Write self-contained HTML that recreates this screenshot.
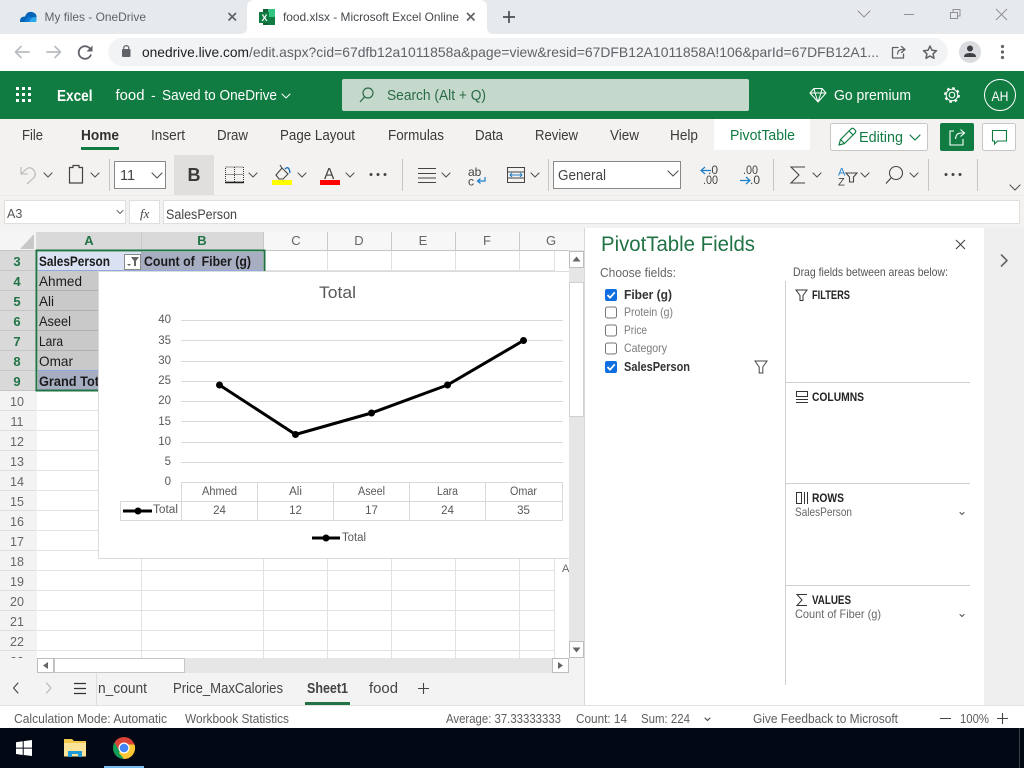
<!DOCTYPE html>
<html><head><meta charset="utf-8"><title>food.xlsx - Microsoft Excel Online</title>
<style>
html,body{margin:0;padding:0;background:#fff;width:1024px;height:768px;overflow:hidden}
svg{display:block;position:absolute;left:0;top:0}
text{font-family:"Liberation Sans","DejaVu Sans",sans-serif;white-space:pre}
.s{fill:none;stroke-linecap:round;stroke-linejoin:round}
</style></head><body>
<svg width="1024" height="768" viewBox="0 0 1024 768" xmlns="http://www.w3.org/2000/svg">
<!-- browser chrome -->
<rect width="1024" height="34" fill="#e7eaed"/>
<rect y="34" width="1024" height="37" fill="#fff"/>
<path d="M240 34Q247 34 247 27V8Q247 0 255 0H479Q487 0 487 8V27Q487 34 494 34Z" fill="#fff"/>
<path d="M20 22Q19.500 16.500 25 16.500Q27 11 32 12Q36 13 36.500 16Q36 22 36 22Z" fill="#0364b8"/>
<path d="M25 22Q36 22 36 22Q36 16 31 17Q27 15 25 22Z" fill="#0f78d4"/>
<path d="M36 22H29Q31 17 35 17Q37.500 17 36 22Z" fill="#28a8ea"/>
<text x="44.500" y="21" font-size="12" fill="#5f6368" textLength="101.500" lengthAdjust="spacingAndGlyphs">My files - OneDrive</text>
<path d="M228.500 13L236 20.500M236 13L228.500 20.500" stroke="#5f6368" stroke-width="1.700"/>
<rect x="263" y="9" width="12" height="16" fill="#185c37"/><rect x="268" y="9" width="7" height="8" fill="#33c481"/><rect x="268" y="17" width="7" height="8" fill="#107c41"/>
<rect x="259" y="12" width="10" height="11" fill="#107c41"/>
<text x="261.500" y="21" font-size="9" font-weight="bold" fill="#fff">X</text>
<text x="283" y="21" font-size="12" fill="#45494d" textLength="176" lengthAdjust="spacingAndGlyphs">food.xlsx - Microsoft Excel Online</text>
<path d="M467 13L474.500 20.500M474.500 13L467 20.500" stroke="#5f6368" stroke-width="1.700"/>
<path d="M509 11V23M503 17H515" stroke="#4a4d51" stroke-width="1.700"/>
<path d="M858 11L864 17L870 11" class="s" stroke="#8f9194"/>
<path d="M904 14.500H914" stroke="#8f9194"/>
<path d="M950.500 12.500H957.500V18.500H950.500ZM953 12V9.500H960V16H957.500" fill="none" stroke="#8f9194"/>
<path d="M996 9L1007 20M1007 9L996 20" stroke="#8f9194"/>
<rect x="108" y="38" width="840" height="28" rx="14" fill="#f1f3f4"/>
<path d="M29 52H16M21 46.500L15.500 52L21 57.500" class="s" stroke="#b9bcc0" stroke-width="1.700"/>
<path d="M47 52H60M55 46.500L60.500 52L55 57.500" class="s" stroke="#b9bcc0" stroke-width="1.700"/>
<path d="M91 50.500A6.300 6.300 0 1 0 91 54.500" fill="none" stroke="#5f6368" stroke-width="1.800"/><path d="M92.500 45.500V51.500H86.500Z" fill="#5f6368"/>
<rect x="122" y="49" width="8.500" height="8" rx="1" fill="#5f6368"/><path d="M123.800 49V47Q126.200 44.300 128.700 47V49" fill="none" stroke="#5f6368" stroke-width="1.200"/>
<text x="142" y="57" font-size="14" fill="#202124" textLength="107" lengthAdjust="spacingAndGlyphs">onedrive.live.com</text>
<text x="249" y="57" font-size="14" fill="#5f6368" textLength="630" lengthAdjust="spacingAndGlyphs">/edit.aspx?cid=67dfb12a1011858a&amp;page=view&amp;resid=67DFB12A1011858A!106&amp;parId=67DFB12A1...</text>
<path d="M898 47.500H892.500V58H903.500V54M897.500 54Q898 49.500 902 49.500H905M901.500 46.500L905 49.500L901.500 52.500" class="s" stroke="#5f6368" stroke-width="1.300"/>
<path d="M930 46L931.900 50.200L936.500 50.700L933.100 53.800L934 58.300L930 56L926 58.300L926.900 53.800L923.500 50.700L928.100 50.200Z" fill="none" stroke="#5f6368" stroke-width="1.500" stroke-linejoin="round"/>
<circle cx="970" cy="52" r="11" fill="#dadce0"/><circle cx="970" cy="48.500" r="3" fill="#3c4043"/><path d="M964 57Q964 53 970 53Q976 53 976 57Z" fill="#3c4043"/>
<circle cx="1002.500" cy="46.500" r="1.600" fill="#5f6368"/><circle cx="1002.500" cy="52" r="1.600" fill="#5f6368"/><circle cx="1002.500" cy="57.500" r="1.600" fill="#5f6368"/>

<!-- green header -->
<rect y="71" width="1024" height="48" fill="#107c41"/>
<g fill="#fff"><rect x="16" y="87" width="3" height="3"/><rect x="22" y="87" width="3" height="3"/><rect x="28" y="87" width="3" height="3"/><rect x="16" y="93" width="3" height="3"/><rect x="22" y="93" width="3" height="3"/><rect x="28" y="93" width="3" height="3"/><rect x="16" y="99" width="3" height="3"/><rect x="22" y="99" width="3" height="3"/><rect x="28" y="99" width="3" height="3"/></g>
<text x="57" y="101" font-size="16" font-weight="bold" fill="#fff" textLength="35.500" lengthAdjust="spacingAndGlyphs">Excel</text>
<text x="115.500" y="100" font-size="14.500" fill="#fff" textLength="29" lengthAdjust="spacingAndGlyphs">food</text>
<text x="151" y="100" font-size="14" fill="#fff">-</text>
<text x="162" y="100" font-size="14.500" fill="#fff" textLength="115" lengthAdjust="spacingAndGlyphs">Saved to OneDrive</text>
<path d="M282 94L286 98L290 94" class="s" stroke="#fff"/>
<rect x="342" y="79" width="407" height="32" rx="2" fill="#c4d9cb"/>
<circle cx="368" cy="93" r="5" fill="none" stroke="#2c6b47" stroke-width="1.200"/><path d="M364.500 97L360 102" stroke="#2c6b47" stroke-width="1.300"/>
<text x="387" y="100" font-size="14.500" fill="#2a6a46" textLength="99" lengthAdjust="spacingAndGlyphs">Search (Alt + Q)</text>
<path d="M814 88.500H822L826 93L818 102L810 93ZM810 93H826M815 93L818 102L821 93M814 88.500L815 93M822 88.500L821 93" fill="none" stroke="#fff" stroke-width="1" stroke-linejoin="round"/>
<text x="834" y="100" font-size="14.500" fill="#fff" textLength="77" lengthAdjust="spacingAndGlyphs">Go premium</text>
<circle cx="952" cy="95" r="2.800" fill="none" stroke="#fff" stroke-width="1.100"/>
<circle cx="952" cy="95" r="7" fill="none" stroke="#fff" stroke-width="1.800" stroke-dasharray="2.700 2.800"/>
<circle cx="952" cy="95" r="5.800" fill="none" stroke="#fff" stroke-width="1"/>
<circle cx="1000" cy="95" r="15.500" fill="none" stroke="#fff" stroke-width="1"/>
<text x="991.500" y="101" font-size="14" fill="#fff" textLength="17" lengthAdjust="spacingAndGlyphs">AH</text>

<!-- ribbon -->
<rect y="119" width="1024" height="109" fill="#f3f2f1"/>
<rect x="714" y="119" width="96" height="31" fill="#fff"/>
<g font-size="14.500" fill="#3b3a39">
<text x="22" y="140" textLength="21" lengthAdjust="spacingAndGlyphs">File</text>
<text x="81" y="140" font-weight="bold" fill="#323130" textLength="38" lengthAdjust="spacingAndGlyphs">Home</text>
<text x="151" y="140" textLength="34" lengthAdjust="spacingAndGlyphs">Insert</text>
<text x="217" y="140" textLength="31" lengthAdjust="spacingAndGlyphs">Draw</text>
<text x="280" y="140" textLength="75" lengthAdjust="spacingAndGlyphs">Page Layout</text>
<text x="388" y="140" textLength="56" lengthAdjust="spacingAndGlyphs">Formulas</text>
<text x="475" y="140" textLength="28" lengthAdjust="spacingAndGlyphs">Data</text>
<text x="535" y="140" textLength="43" lengthAdjust="spacingAndGlyphs">Review</text>
<text x="610" y="140" textLength="29" lengthAdjust="spacingAndGlyphs">View</text>
<text x="670" y="140" textLength="28" lengthAdjust="spacingAndGlyphs">Help</text>
<text x="730" y="140" fill="#107c41" textLength="65" lengthAdjust="spacingAndGlyphs">PivotTable</text>
</g>
<rect x="81" y="147" width="38" height="3" fill="#107c41"/>
<rect x="830.500" y="123.500" width="97" height="27" rx="2" fill="#fff" stroke="#c8c6c4"/>
<path d="M839 145L840.500 139.500L851 129Q852.500 127.500 854 129L855 130Q856.500 131.500 855 133L844.500 143.500ZM849 131L853 135M840.500 139.500L844.500 143.500" fill="none" stroke="#107c41" stroke-width="1.200" stroke-linejoin="round"/>
<text x="859" y="142" font-size="15" fill="#107c41" textLength="44" lengthAdjust="spacingAndGlyphs">Editing</text>
<path d="M910 135L915 140L920 135" class="s" stroke="#107c41" stroke-width="1.200"/>
<rect x="940" y="123" width="34" height="28" rx="2" fill="#107c41"/>
<path d="M954 131H950V145H963V139M955.500 139Q956 133 961 133H964M960.500 129.500L964.500 133L960.500 136.500" fill="none" stroke="#fff" stroke-width="1.100"/>
<rect x="982.500" y="123.500" width="33" height="27" rx="2" fill="#fff" stroke="#c8c6c4"/>
<path d="M992.500 130.500H1006.500V141H997.500L994.500 144V141H992.500Z" fill="none" stroke="#107c41" stroke-width="1.100"/>

<!-- toolbar -->
<g stroke="#c8c6c4"><path d="M109.500 159V191M402.500 159V191M548.500 159V191M773.500 159V191M928.500 159V191M977.500 159V191"/></g>
<path d="M21 167V174H28M21 174L27 168.500Q31 166.500 34 170.500Q37 175 33 178.500L27 184" fill="none" stroke="#b8b6b4" stroke-width="1.100"/>
<path d="M69.500 167.500H73V165.500H79V167.500H82.500V183H69.500Z" fill="none" stroke="#444" stroke-width="1.200"/>
<rect x="114.500" y="161.500" width="51" height="27" fill="#fff" stroke="#8a8886"/>
<text x="120" y="180" font-size="14.500" fill="#444">11</text>
<rect x="174" y="155" width="40" height="40" fill="#e0dfde"/>
<text x="187.500" y="181" font-size="18" font-weight="bold" fill="#3b3a39">B</text>
<path d="M225.500 167H243.500V182H225.500ZM234.500 167V182M225.500 174.500H243.500" fill="none" stroke="#333" stroke-width="1" stroke-dasharray="1 1"/><path d="M225 182.500H244" stroke="#222" stroke-width="1.400"/>
<path d="M276 175L282 168L288 174L283 179H279ZM282 168L280 165" fill="none" stroke="#444" stroke-width="1.100"/><path d="M285 169Q289 165 290 173" fill="none" stroke="#1d6fbb" stroke-width="1.400"/>
<rect x="272" y="180" width="20" height="5" fill="#ffff00"/>
<text x="324" y="179" font-size="15.500" fill="#444">A</text>
<rect x="320" y="180" width="20" height="5" fill="#ff0000"/>
<g fill="#444"><circle cx="371" cy="174.500" r="1.500"/><circle cx="378" cy="174.500" r="1.500"/><circle cx="385" cy="174.500" r="1.500"/></g>
<path d="M418 168.500H436M418 173.500H436M418 178H436M418 182.500H436" stroke="#444" stroke-width="1.100"/>
<text x="468" y="176" font-size="12" fill="#444">ab</text><text x="468" y="185.500" font-size="12" fill="#444">c</text>
<path d="M485 177V181H478M480.500 178.500L477.500 181L480.500 183.500" fill="none" stroke="#1d7fc9" stroke-width="1.200"/>
<rect x="507.500" y="167.500" width="17" height="15" fill="none" stroke="#444"/><path d="M508 172H524M508 178H524" stroke="#444"/><path d="M510 175H522M512 173L510 175L512 177M520 173L522 175L520 177" fill="none" stroke="#1d7fc9"/>
<rect x="553.500" y="161.500" width="127" height="27" fill="#fff" stroke="#8a8886"/>
<text x="558" y="180" font-size="14.500" fill="#444" textLength="48" lengthAdjust="spacingAndGlyphs">General</text>
<g class="s" stroke="#555" stroke-width="1.100" fill="none">
<path d="M44 173L48 177L52 173M91 173L95 177L99 173M152 173L157 178L162 173M249 173L253 177L257 173M298 173L302 177L306 173M346 173L350 177L354 173M442 173L446 177L450 173M531 173L535 177L539 173M668 171L673 176L678 171M813 173L817 177L821 173M861 173L865 177L869 173M910 173L914 177L918 173M1010 185L1015 190L1020 185"/>
</g>
<g font-size="12" fill="#444"><text x="708" y="174">.0</text><text x="703" y="184" textLength="15" lengthAdjust="spacingAndGlyphs">.00</text><text x="743" y="174" textLength="15" lengthAdjust="spacingAndGlyphs">.00</text><text x="750" y="184">.0</text></g>
<path d="M701 170.500H711M705 167L701 170.500L705 174" fill="none" stroke="#1d7fc9" stroke-width="1.200"/>
<path d="M740 180.500H750M746 177L750 180.500L746 184" fill="none" stroke="#1d7fc9" stroke-width="1.200"/>
<path d="M805 167H791L799 175L791 183H805" fill="none" stroke="#444" stroke-width="1.100"/>
<text x="838" y="175.500" font-size="11" fill="#1d7fc9">A</text><text x="838" y="185.500" font-size="11" fill="#444">Z</text>
<path d="M846 173H857L853.500 177V182H849.500V177Z" fill="none" stroke="#444" stroke-width="1.100"/>
<circle cx="896" cy="173" r="6.500" fill="none" stroke="#444" stroke-width="1.100"/><path d="M891 178L886 183.500" stroke="#444" stroke-width="1.200"/>
<g fill="#444"><circle cx="946" cy="174.500" r="1.500"/><circle cx="953" cy="174.500" r="1.500"/><circle cx="960" cy="174.500" r="1.500"/></g>
<rect y="195" width="1024" height="1" fill="#ecebea"/>

<!-- formula bar -->
<rect x="4.500" y="200.500" width="121" height="23" fill="#fff" stroke="#e1dfdd"/>
<text x="7" y="218" font-size="12.500" fill="#555">A3</text>
<path d="M117 210.500L120 213.500L123 210.500" class="s" stroke="#666" stroke-width="1"/>
<rect x="129.500" y="200.500" width="30" height="23" fill="#fff" stroke="#e1dfdd"/>
<text x="140" y="218" font-size="13" font-style="italic" fill="#444" style="font-family:'Liberation Serif',serif">fx</text>
<rect x="163.500" y="200.500" width="856" height="23" fill="#fff" stroke="#e1dfdd"/>
<text x="166" y="219" font-size="13.500" fill="#444" textLength="71" lengthAdjust="spacingAndGlyphs">SalesPerson</text>

<!-- sheet area -->
<rect y="228" width="585" height="477" fill="#f3f3f3"/>
<rect x="37" y="251" width="532" height="407" fill="#fff"/>
<rect x="0" y="232" width="36" height="18" fill="#f5f5f5"/>
<path d="M34 234V249H20Z" fill="#c8c8c8"/>
<rect x="36" y="232" width="228" height="18" fill="#d9d9d9"/>
<rect x="264" y="232" width="305" height="18" fill="#f7f7f7"/>
<rect x="569" y="232" width="15" height="18" fill="#f7f7f7"/>
<rect x="0" y="251" width="36" height="140" fill="#d9d9d9"/>
<g stroke="#c9c9c9"><path d="M141.500 232V250M263.500 232V250M327.500 232V250M391.500 232V250M455.500 232V250M519.500 232V250"/></g>
<path d="M0 250.500H569" stroke="#c6c6c6"/>
<g font-size="13" text-anchor="middle">
<text x="89" y="245" font-weight="bold" fill="#217346">A</text>
<text x="202" y="245" font-weight="bold" fill="#217346">B</text>
<g fill="#666"><text x="296" y="245">C</text><text x="359" y="245">D</text><text x="423" y="245">E</text><text x="487" y="245">F</text><text x="551" y="245">G</text></g>
</g>
<!-- grid -->
<g stroke="#e1e1e1">
<path d="M37 270.500H555M37 290.500H555M37 310.500H555M37 330.500H555M37 350.500H555M37 370.500H555M37 390.500H555M37 410.500H555M37 430.500H555M37 450.500H555M37 470.500H555M37 490.500H555M37 510.500H555M37 530.500H555M37 550.500H555M37 570.500H555M37 590.500H555M37 610.500H555M37 630.500H555M37 650.500H555"/>
<path d="M141.500 251V658M263.500 251V658M327.500 251V658M391.500 251V658M455.500 251V658M519.500 251V658M554.500 251V658"/>
</g>
<path d="M0 270.500H36M0 290.500H36M0 310.500H36M0 330.500H36M0 350.500H36M0 370.500H36M0 390.500H36" stroke="#c6c6c6"/>
<path d="M0 410.500H36M0 430.500H36M0 450.500H36M0 470.500H36M0 490.500H36M0 510.500H36M0 530.500H36M0 550.500H36M0 570.500H36M0 590.500H36M0 610.500H36M0 630.500H36M0 650.500H36" stroke="#dedede"/>
<g font-size="13" text-anchor="middle" font-weight="bold" fill="#217346">
<text x="17" y="266">3</text><text x="17" y="286">4</text><text x="17" y="306">5</text><text x="17" y="326">6</text><text x="17" y="346">7</text><text x="17" y="366">8</text><text x="17" y="386">9</text>
</g>
<g font-size="12.500" text-anchor="middle" fill="#666">
<text x="17" y="406">10</text><text x="17" y="426">11</text><text x="17" y="446">12</text><text x="17" y="466">13</text><text x="17" y="486">14</text><text x="17" y="506">15</text><text x="17" y="526">16</text><text x="17" y="546">17</text><text x="17" y="566">18</text><text x="17" y="586">19</text><text x="17" y="606">20</text><text x="17" y="626">21</text><text x="17" y="646">22</text><text x="17" y="666">23</text>
</g>
<rect x="0" y="658" width="37" height="15" fill="#f3f3f3"/>
<!-- pivot -->
<rect x="38" y="252" width="103" height="19" fill="#d9e1f2"/>
<rect x="141" y="252" width="122" height="19" fill="#a8aec2"/>
<rect x="38" y="271" width="61" height="99" fill="#c9c9c9"/>
<rect x="38" y="370.500" width="61" height="19" fill="#a8aec2"/>
<path d="M38 270.500H263M38 370.500H99" stroke="#8ea9db"/>
<path d="M38 290.500H99M38 310.500H99M38 330.500H99M38 350.500H99" stroke="#b0b0b0"/>
<rect x="36.500" y="250.500" width="228" height="140" fill="none" stroke="#217346" stroke-width="2"/>
<g font-size="14" fill="#1b1b1b">
<text x="39" y="266" font-weight="bold" textLength="71" lengthAdjust="spacingAndGlyphs">SalesPerson</text>
<text x="144" y="266" font-weight="bold" textLength="107" lengthAdjust="spacingAndGlyphs">Count of  Fiber (g)</text>
<text x="39" y="286" textLength="43" lengthAdjust="spacingAndGlyphs">Ahmed</text>
<text x="39" y="306" textLength="15" lengthAdjust="spacingAndGlyphs">Ali</text>
<text x="39" y="326" textLength="32" lengthAdjust="spacingAndGlyphs">Aseel</text>
<text x="39" y="346" textLength="24" lengthAdjust="spacingAndGlyphs">Lara</text>
<text x="39" y="366" textLength="34" lengthAdjust="spacingAndGlyphs">Omar</text>
<text x="39" y="386" font-weight="bold" textLength="60" lengthAdjust="spacingAndGlyphs">Grand Tot</text>
</g>
<rect x="124.500" y="254.500" width="16" height="15" fill="#fff" stroke="#8a8a8a"/>
<path d="M131 257H139L136 261V266H134V261Z" fill="#666"/><path d="M127 264H131L129 266Z" fill="#666"/>

<!-- chart -->
<rect x="98.500" y="271.500" width="471" height="287" fill="#fff" stroke="#dcdcdc"/>
<text x="319" y="298" font-size="17" fill="#595959" textLength="37" lengthAdjust="spacingAndGlyphs">Total</text>
<g stroke="#d9d9d9"><path d="M181 320.500H563M181 340.500H563M181 361.500H563M181 381.500H563M181 401.500H563M181 421.500H563M181 442.500H563M181 462.500H563"/>
<path d="M181 482.500H563M120 501.500H563M120 520.500H563M181.500 482V520M257.500 482V520M333.500 482V520M409.500 482V520M485.500 482V520M562.500 482V520M120.500 501V520"/></g>
<g font-size="11.500" fill="#595959" text-anchor="end">
<text x="171" y="323">40</text><text x="171" y="344">35</text><text x="171" y="364">30</text><text x="171" y="384">25</text><text x="171" y="404">20</text><text x="171" y="425">15</text><text x="171" y="445">10</text><text x="171" y="465">5</text><text x="171" y="485">0</text>
</g>
<path d="M219.500 385L295.500 434.500L371.500 413L447.500 385L523.500 340.500" fill="none" stroke="#000" stroke-width="3" stroke-linejoin="round"/>
<g fill="#000"><circle cx="219.500" cy="385" r="3.500"/><circle cx="295.500" cy="434.500" r="3.500"/><circle cx="371.500" cy="413" r="3.500"/><circle cx="447.500" cy="385" r="3.500"/><circle cx="523.500" cy="340.500" r="3.500"/></g>
<g font-size="11.500" fill="#595959" text-anchor="middle">
<text x="219.500" y="495" textLength="35" lengthAdjust="spacingAndGlyphs">Ahmed</text><text x="295.500" y="495">Ali</text><text x="371.500" y="495" textLength="27" lengthAdjust="spacingAndGlyphs">Aseel</text><text x="447.500" y="495" textLength="21" lengthAdjust="spacingAndGlyphs">Lara</text><text x="523.500" y="495" textLength="27" lengthAdjust="spacingAndGlyphs">Omar</text>
<text x="219.500" y="514">24</text><text x="295.500" y="514">12</text><text x="371.500" y="514">17</text><text x="447.500" y="514">24</text><text x="523.500" y="514">35</text>
</g>
<path d="M123 511H152M312 538H340" stroke="#000" stroke-width="3"/><circle cx="138" cy="511" r="3.500"/><circle cx="326" cy="538" r="3.500"/>
<text x="153" y="513" font-size="11.500" fill="#595959" textLength="25" lengthAdjust="spacingAndGlyphs">Total</text>
<text x="342" y="541" font-size="11.500" fill="#595959" textLength="24" lengthAdjust="spacingAndGlyphs">Total</text>
<text x="562" y="572" font-size="11" fill="#666">A</text>

<!-- scrollbars -->
<rect x="569" y="250" width="15" height="408" fill="#e6e6e6"/>
<rect x="569.500" y="251.500" width="14" height="16" fill="#fff" stroke="#bdbdbd"/><path d="M572.500 261.500L576.500 256.500L580.500 261.500Z" fill="#666"/>
<rect x="569.500" y="282.500" width="14" height="134" fill="#fff" stroke="#d0d0d0"/>
<rect x="569.500" y="641.500" width="14" height="16" fill="#fff" stroke="#bdbdbd"/><path d="M572.500 647.500H580.500L576.500 652.500Z" fill="#666"/>
<rect x="37" y="658" width="532" height="15" fill="#e6e6e6"/>
<rect x="37.500" y="658.500" width="16" height="14" fill="#fff" stroke="#bdbdbd"/><path d="M48 662V669L43 665.500Z" fill="#666"/>
<rect x="54.500" y="658.500" width="130" height="14" fill="#fff" stroke="#c6c6c6"/>
<rect x="552.500" y="658.500" width="16" height="14" fill="#fff" stroke="#bdbdbd"/><path d="M558 662V669L563 665.500Z" fill="#666"/>

<!-- sheet tabs -->
<rect y="673" width="585" height="32" fill="#f3f3f3"/>
<path d="M96.500 673V705" stroke="#dedede"/>
<path d="M18 683L13.500 688L18 693" class="s" stroke="#444" stroke-width="1.100"/>
<path d="M46.500 683L51 688L46.500 693" class="s" stroke="#b5b5b5" stroke-width="1.100"/>
<path d="M74 683.500H86M74 688.500H86M74 693.500H86" stroke="#333" stroke-width="1.200"/>
<g font-size="14.500" fill="#444">
<text x="98" y="693" textLength="49" lengthAdjust="spacingAndGlyphs">n_count</text>
<text x="173" y="693" textLength="110" lengthAdjust="spacingAndGlyphs">Price_MaxCalories</text>
<text x="307" y="693" font-weight="bold" textLength="41" lengthAdjust="spacingAndGlyphs">Sheet1</text>
<text x="369" y="693" textLength="29" lengthAdjust="spacingAndGlyphs">food</text>
</g>
<rect x="305" y="702" width="45" height="3" fill="#217346"/>
<path d="M423.500 683V694M418 688.500H429" stroke="#444" stroke-width="1.100"/>

<!-- pivot pane -->
<rect x="585" y="228" width="399" height="477" fill="#fff"/>
<path d="M584.500 228V705" stroke="#d8d8d8"/>
<rect x="984" y="228" width="40" height="477" fill="#efefef"/>
<path d="M1001.500 255L1007 260.500L1001.500 266" class="s" stroke="#666" stroke-width="1.600"/>
<text x="601" y="251" font-size="21" fill="#217346" textLength="154" lengthAdjust="spacingAndGlyphs">PivotTable Fields</text>
<path d="M956 240L965 249M965 240L956 249" stroke="#444" stroke-width="1.100"/>
<text x="600" y="277" font-size="12.500" fill="#666" textLength="76" lengthAdjust="spacingAndGlyphs">Choose fields:</text>
<text x="793" y="276" font-size="12" fill="#555" textLength="155" lengthAdjust="spacingAndGlyphs">Drag fields between areas below:</text>
<path d="M785.500 281V685M786 382.500H970M786 483.500H970M786 585.500H970" stroke="#d0d0d0"/>
<rect x="605" y="289" width="12" height="12" rx="2" fill="#0f6fe0"/><path d="M607.500 295L610 297.700L614.800 292.300" fill="none" stroke="#fff" stroke-width="1.800"/>
<rect x="605.500" y="307" width="11" height="11" rx="2" fill="#fff" stroke="#767676"/>
<rect x="605.500" y="325" width="11" height="11" rx="2" fill="#fff" stroke="#767676"/>
<rect x="605.500" y="343" width="11" height="11" rx="2" fill="#fff" stroke="#767676"/>
<rect x="605" y="361" width="12" height="12" rx="2" fill="#0f6fe0"/><path d="M607.500 367L610 369.700L614.800 364.300" fill="none" stroke="#fff" stroke-width="1.800"/>
<text x="624" y="299" font-size="13" font-weight="bold" fill="#333" textLength="48" lengthAdjust="spacingAndGlyphs">Fiber (g)</text>
<g font-size="12" fill="#7a7a7a">
<text x="624" y="316" textLength="49" lengthAdjust="spacingAndGlyphs">Protein (g)</text>
<text x="624" y="334" textLength="23" lengthAdjust="spacingAndGlyphs">Price</text>
<text x="624" y="352" textLength="43" lengthAdjust="spacingAndGlyphs">Category</text>
</g>
<text x="624" y="371" font-size="13" font-weight="bold" fill="#333" textLength="66" lengthAdjust="spacingAndGlyphs">SalesPerson</text>
<path d="M755 361H767L762.800 367V373H759.200V367Z" fill="none" stroke="#444" stroke-width="1"/>
<path d="M796 290H807L803 295.500V300.500H800V295.500Z" fill="none" stroke="#333" stroke-width="1"/>
<g font-size="12" font-weight="bold" fill="#222">
<text x="812" y="299" textLength="38" lengthAdjust="spacingAndGlyphs">FILTERS</text>
<text x="812" y="401" textLength="52" lengthAdjust="spacingAndGlyphs">COLUMNS</text>
<text x="812" y="502" textLength="32" lengthAdjust="spacingAndGlyphs">ROWS</text>
<text x="812" y="604" textLength="39" lengthAdjust="spacingAndGlyphs">VALUES</text>
</g>
<path d="M796.500 391.500H807.500V396.500H796.500ZM796 399.500H808M796 402.500H808" fill="none" stroke="#333"/>
<path d="M796.500 492.500H801.500V503.500H796.500ZM804.500 492V504M807.500 492V504" fill="none" stroke="#333"/>
<path d="M807 594.500H797L802 600L797 605.500H807" fill="none" stroke="#333"/>
<text x="795" y="516" font-size="12" fill="#666" textLength="57" lengthAdjust="spacingAndGlyphs">SalesPerson</text>
<text x="795" y="618" font-size="12" fill="#666" textLength="86" lengthAdjust="spacingAndGlyphs">Count of Fiber (g)</text>
<path d="M960 512.500L962 514.500L964 512.500M960 614.500L962 616.500L964 614.500" class="s" stroke="#555" stroke-width="1.100"/>

<!-- status bar -->
<rect y="705" width="1024" height="23" fill="#fff"/>
<path d="M0 705.500H1024" stroke="#e1e1e1"/>
<g font-size="12.500" fill="#605e5c">
<text x="14" y="723" textLength="153" lengthAdjust="spacingAndGlyphs">Calculation Mode: Automatic</text>
<text x="185" y="723" textLength="104" lengthAdjust="spacingAndGlyphs">Workbook Statistics</text>
<text x="446" y="723" textLength="115" lengthAdjust="spacingAndGlyphs">Average: 37.33333333</text>
<text x="576" y="723" textLength="51" lengthAdjust="spacingAndGlyphs">Count: 14</text>
<text x="641" y="723" textLength="49" lengthAdjust="spacingAndGlyphs">Sum: 224</text>
<text x="753" y="723" textLength="145" lengthAdjust="spacingAndGlyphs">Give Feedback to Microsoft</text>
<text x="960" y="723" textLength="29" lengthAdjust="spacingAndGlyphs">100%</text>
</g>
<path d="M705 718L707.500 720.500L710 718" class="s" stroke="#444" stroke-width="1.100"/>
<path d="M940 718.500H951M997 718.500H1008M1002.500 713V724" stroke="#444" stroke-width="1.100"/>

<!-- taskbar -->
<rect y="728" width="1024" height="40" fill="#020814"/>
<path d="M16 742.300L22.700 741.300V747.600H16ZM23.700 741.100L32 740V747.600H23.700ZM16 748.600H22.700V755L16 754ZM23.700 748.600H32V756L23.700 755Z" fill="#fff"/>
<path d="M64 739H72L74 741H86V756H64Z" fill="#f2c94c"/><rect x="64" y="743" width="22" height="13.500" fill="#fbe39a"/>
<path d="M68 757V751H82V757H78V754H72V757Z" fill="#1e9ad6"/>
<circle cx="124" cy="748" r="11" fill="#db4437"/>
<path d="M124 759A11 11 0 0 1 114.500 742.500L120 752Z" fill="#0f9d58"/>
<path d="M124 759A11 11 0 0 0 134.500 744.500H124L119 753Z" fill="#fcc934"/>
<circle cx="124" cy="748" r="5.500" fill="#fff"/><circle cx="124" cy="748" r="4.300" fill="#4285f4"/>
<rect x="104" y="766" width="40" height="2" fill="#76b9ed"/>
<rect x="1019" y="728" width="1" height="40" fill="#3a3f48"/>
</svg>
</body></html>
